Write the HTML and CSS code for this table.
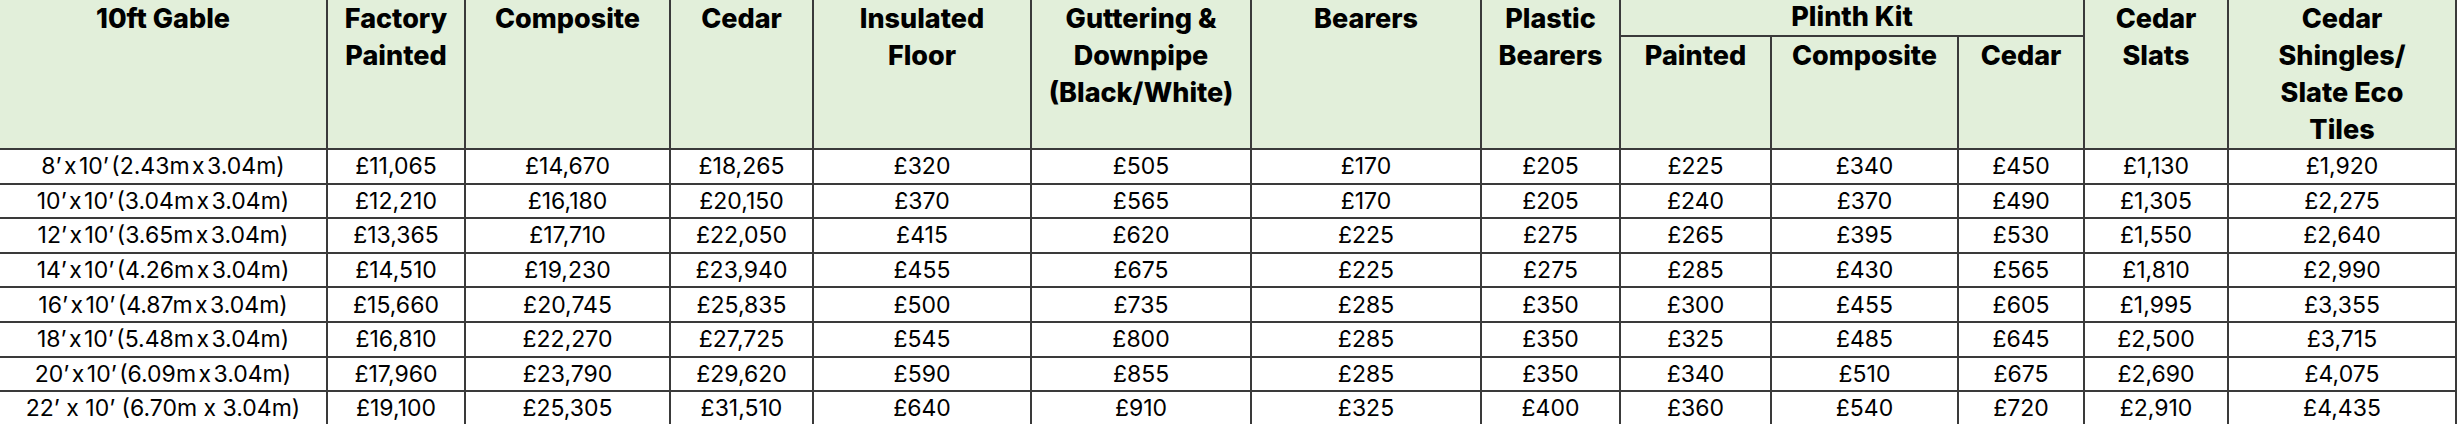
FILE: index.html
```html
<!DOCTYPE html>
<html lang="en">
<head>
<meta charset="utf-8">
<title>10ft Gable Prices</title>
<link rel="stylesheet" href="styles.css">
</head>
<body>
<table class="price-table">
  <colgroup>
    <col class="c-size"><col class="c-fp"><col class="c-comp"><col class="c-cedar"><col class="c-ins"><col class="c-gut"><col class="c-bear"><col class="c-pbear"><col class="c-pp"><col class="c-pc"><col class="c-pce"><col class="c-slat"><col class="c-shing">
  </colgroup>
  <thead>
    <tr class="head-top">
      <th rowspan="2" class="first">10ft Gable</th>
      <th rowspan="2">Factory<br>Painted</th>
      <th rowspan="2">Composite</th>
      <th rowspan="2">Cedar</th>
      <th rowspan="2">Insulated<br>Floor</th>
      <th rowspan="2">Guttering &amp;<br>Downpipe<br>(Black/White)</th>
      <th rowspan="2">Bearers</th>
      <th rowspan="2">Plastic<br>Bearers</th>
      <th colspan="3" class="group">Plinth Kit</th>
      <th rowspan="2">Cedar<br>Slats</th>
      <th rowspan="2">Cedar<br>Shingles/<br>Slate Eco<br>Tiles</th>
    </tr>
    <tr class="head-sub">
      <th>Painted</th>
      <th>Composite</th>
      <th>Cedar</th>
    </tr>
  </thead>
  <tbody>
    <tr><td class="first tight">8’ x 10’ (2.43m x 3.04m)</td><td>£11,065</td><td>£14,670</td><td>£18,265</td><td>£320</td><td>£505</td><td>£170</td><td>£205</td><td>£225</td><td>£340</td><td>£450</td><td>£1,130</td><td>£1,920</td></tr>
    <tr><td class="first tight">10’ x 10’ (3.04m x 3.04m)</td><td>£12,210</td><td>£16,180</td><td>£20,150</td><td>£370</td><td>£565</td><td>£170</td><td>£205</td><td>£240</td><td>£370</td><td>£490</td><td>£1,305</td><td>£2,275</td></tr>
    <tr><td class="first tight">12’ x 10’ (3.65m x 3.04m)</td><td>£13,365</td><td>£17,710</td><td>£22,050</td><td>£415</td><td>£620</td><td>£225</td><td>£275</td><td>£265</td><td>£395</td><td>£530</td><td>£1,550</td><td>£2,640</td></tr>
    <tr><td class="first tight">14’ x 10’ (4.26m x 3.04m)</td><td>£14,510</td><td>£19,230</td><td>£23,940</td><td>£455</td><td>£675</td><td>£225</td><td>£275</td><td>£285</td><td>£430</td><td>£565</td><td>£1,810</td><td>£2,990</td></tr>
    <tr><td class="first tight">16’ x 10’ (4.87m x 3.04m)</td><td>£15,660</td><td>£20,745</td><td>£25,835</td><td>£500</td><td>£735</td><td>£285</td><td>£350</td><td>£300</td><td>£455</td><td>£605</td><td>£1,995</td><td>£3,355</td></tr>
    <tr><td class="first tight">18’ x 10’ (5.48m x 3.04m)</td><td>£16,810</td><td>£22,270</td><td>£27,725</td><td>£545</td><td>£800</td><td>£285</td><td>£350</td><td>£325</td><td>£485</td><td>£645</td><td>£2,500</td><td>£3,715</td></tr>
    <tr><td class="first tight">20’ x 10’ (6.09m x 3.04m)</td><td>£17,960</td><td>£23,790</td><td>£29,620</td><td>£590</td><td>£855</td><td>£285</td><td>£350</td><td>£340</td><td>£510</td><td>£675</td><td>£2,690</td><td>£4,075</td></tr>
    <tr><td class="first">22’ x 10’ (6.70m x 3.04m)</td><td>£19,100</td><td>£25,305</td><td>£31,510</td><td>£640</td><td>£910</td><td>£325</td><td>£400</td><td>£360</td><td>£540</td><td>£720</td><td>£2,910</td><td>£4,435</td></tr>
  </tbody>
</table>
</body>
</html>
```
FILE: styles.css
```css
html, body {
  margin: 0;
  padding: 0;
  background: #ffffff;
}

.price-table {
  border-collapse: collapse;
  table-layout: fixed;
  width: 2456px;
  font-family: Inter, "Liberation Sans", sans-serif;
  color: #000000;
}

.c-size { width: 327px; }
.c-fp { width: 138px; }
.c-comp { width: 205px; }
.c-cedar { width: 143px; }
.c-ins { width: 218px; }
.c-gut { width: 220px; }
.c-bear { width: 230px; }
.c-pbear { width: 139px; }
.c-pp { width: 151px; }
.c-pc { width: 187px; }
.c-pce { width: 126px; }
.c-slat { width: 144px; }
.c-shing { width: 228px; }

.price-table th,
.price-table td {
  border: 2px solid #3a3a3a;
  padding: 0;
  text-align: center;
  white-space: nowrap;
}

.price-table th {
  background: #e2efda;
  font-weight: 800;
  font-size: 27px;
  line-height: 37px;
  vertical-align: top;
  border-top: none;
}

.price-table th.group {
  line-height: 34px;
}

.head-sub th {
  border-top: 2px solid #3a3a3a;
}

.head-top {
  height: 35px;
}

.head-sub {
  height: 111px;
}

.price-table td {
  font-size: 23px;
  line-height: 30px;
  height: 30px;
  vertical-align: middle;
}

.price-table tbody tr {
  height: 34.6px;
}

.price-table .first {
  border-left: none;
}

.tight {
  word-spacing: -4px;
}
```
